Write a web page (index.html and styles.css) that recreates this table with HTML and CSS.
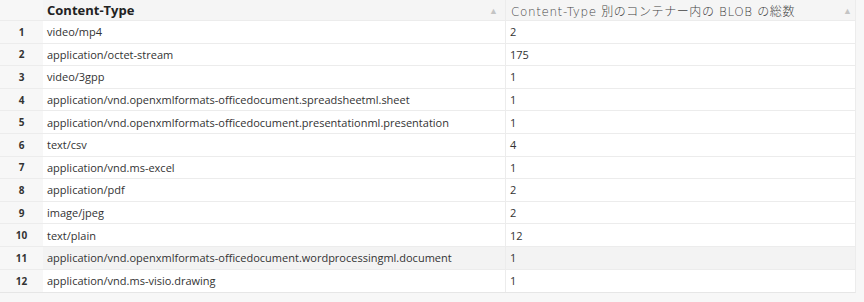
FILE: index.html
```html
<!DOCTYPE html>
<html lang="ja">
<head>
<meta charset="utf-8">
<link rel="stylesheet" href="styles.css">
</head>
<body>
<div class="wrap">
  <div class="grid">
    <div class="row head">
      <div class="num"></div>
      <div class="cell c1"><span class="htxt">Content-Type</span><span class="sort">&#9650;</span></div>
      <div class="cell c2"><span class="htxt jp">Content-Type 別のコンテナー内の BLOB の総数</span><span class="sort">&#9650;</span></div>
    </div>
    <div class="row"><div class="num">1</div><div class="cell c1">video/mp4</div><div class="cell c2">2</div></div>
    <div class="row"><div class="num">2</div><div class="cell c1"><span class="clip">application/octet-stream</span></div><div class="cell c2">175</div></div>
    <div class="row"><div class="num">3</div><div class="cell c1">video/3gpp</div><div class="cell c2">1</div></div>
    <div class="row"><div class="num">4</div><div class="cell c1">application/vnd.openxmlformats-officedocument.spreadsheetml.sheet</div><div class="cell c2">1</div></div>
    <div class="row"><div class="num">5</div><div class="cell c1">application/vnd.openxmlformats-officedocument.presentationml.presentation</div><div class="cell c2">1</div></div>
    <div class="row"><div class="num">6</div><div class="cell c1">text/csv</div><div class="cell c2">4</div></div>
    <div class="row"><div class="num">7</div><div class="cell c1">application/vnd.ms-excel</div><div class="cell c2">1</div></div>
    <div class="row"><div class="num">8</div><div class="cell c1">application/pdf</div><div class="cell c2">2</div></div>
    <div class="row"><div class="num">9</div><div class="cell c1">image/jpeg</div><div class="cell c2">2</div></div>
    <div class="row"><div class="num">10</div><div class="cell c1">text/plain</div><div class="cell c2">12</div></div>
    <div class="row hover"><div class="num">11</div><div class="cell c1">application/vnd.openxmlformats-officedocument.wordprocessingml.document</div><div class="cell c2">1</div></div>
    <div class="row last"><div class="num">12</div><div class="cell c1">application/vnd.ms-visio.drawing</div><div class="cell c2">1</div></div>
  </div>
</div>
</body>
</html>
```
FILE: styles.css
```css
html, body {
  margin: 0;
  padding: 0;
  background: #f7f7f7;
}
.wrap {
  width: 864px;
  height: 302px;
  display: flex;
  align-items: flex-start;
}
.grid {
  width: 855px;
  border-right: 1px solid #ececec;
  border-bottom: 1px solid #e6e6e6;
  font-family: "Open Sans", "Noto Sans", sans-serif;
  font-size: 11px;
  color: #333;
}
.row {
  display: grid;
  grid-template-columns: 43px 463px 1fr;
  height: 22.6px;
  border-bottom: 1px solid #ececec;
  box-sizing: border-box;
}
.row .cell { background: #fff; }
.row.last { border-bottom: none; }
.row.head { height: 21px; }
.row.head .cell { background: #f5f5f5; }
.row.hover .cell { background: #f3f3f3; }
.num {
  background: #f7f7f7;
  font-size: 10px;
  font-weight: 700;
  color: #333;
  display: flex;
  align-items: center;
  justify-content: center;
}
.cell {
  display: flex;
  align-items: center;
  padding-left: 4px;
  white-space: nowrap;
  overflow: hidden;
}
.c1 { border-right: 1px solid #ececec; }
.head .cell { justify-content: space-between; }
.head .c1 { padding-right: 7px; }
.head .c2 { padding-right: 3px; }
.htxt { font-weight: 700; color: #222; font-size: 13px; }
.htxt.jp {
  font-family: "DejaVu Sans", "Noto Sans CJK JP", sans-serif;
  font-weight: 300;
  color: #444;
  font-size: 12px;
  letter-spacing: 0.6px;
  padding-left: 1px;
}
.sort {
  font-size: 9px;
  color: #c4c4c4;
}
.clip {
  display: inline-block;
  width: 127px;
  overflow: hidden;
}
```
